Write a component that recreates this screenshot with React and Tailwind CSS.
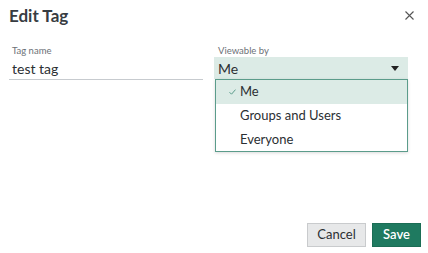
import React from "react";

export default function App() {
  return (
    <div
      className="w-[428px] h-[253px] bg-white flex flex-col text-[#2b2f33]"
      style={{ fontFamily: "Lato, 'Open Sans', sans-serif" }}
    >
      <div className="flex items-center justify-between pl-[9px] pr-[14px] pt-[4px] h-[26px]">
        <h1 className="text-[17px] font-bold text-[#373c42] leading-none">Edit Tag</h1>
        <svg width="9" height="9" viewBox="0 0 9 9" className="text-[#555]">
          <path d="M0.5 0.5 L8.5 8.5 M8.5 0.5 L0.5 8.5" stroke="currentColor" strokeWidth="1.1" />
        </svg>
      </div>
      <div className="flex pl-[9px] pt-[19px] gap-[11px]">
        <div className="w-[194px] flex flex-col">
          <label className="text-[9.5px] text-[#6c7177] pl-[3px] leading-[12px]">Tag name</label>
          <div className="h-[23px] flex items-center pl-[3px] text-[14px] border-b border-[#c7cbcf] text-[#2b2f33]">
            test tag
          </div>
        </div>
        <div className="w-[194px] flex flex-col relative">
          <label className="text-[9.5px] text-[#6c7177] pl-[4px] leading-[12px]">Viewable by</label>
          <div className="h-[22px] flex items-center justify-between pl-[4px] pr-[9px] bg-[#dcebe6] text-[14px]">
            <span>Me</span>
            <svg width="8" height="5" viewBox="0 0 8 5">
              <path d="M0 0 H8 L4 5 Z" fill="#222" />
            </svg>
          </div>
          <div className="absolute left-[1px] right-0 top-[34px] border border-[#5b9c8b] bg-white shadow-[0_1px_3px_rgba(0,0,0,0.15)] text-[13px]">
            <div className="h-[24px] flex items-center bg-[#dcebe6]">
              <span className="w-[24px] flex justify-end pr-[4px]">
                <svg width="7" height="6" viewBox="0 0 7 6">
                  <path d="M0.5 3.2 L2.5 5.2 L6.5 0.6" stroke="#5b9c8b" strokeWidth="1" fill="none" />
                </svg>
              </span>
              <span>Me</span>
            </div>
            <div className="h-[24px] flex items-center pl-[24px]">Groups and Users</div>
            <div className="h-[23px] flex items-center pl-[24px]">Everyone</div>
          </div>
        </div>
      </div>
      <div className="mt-auto flex justify-end gap-[6px] pr-[7px] pb-[6px]">
        <button className="h-[24px] w-[59px] bg-[#e7e8e9] border border-[#c9cbcd] text-[13px] text-[#2b2f33]">
          Cancel
        </button>
        <button className="h-[24px] w-[49px] bg-[#1f7a60] border border-[#1b6d55] text-[13px] text-white font-semibold">
          Save
        </button>
      </div>
    </div>
  );
}
